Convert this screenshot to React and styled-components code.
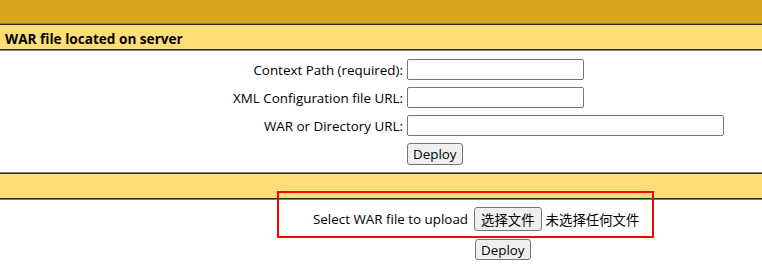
import React from 'react';
import styled, { createGlobalStyle } from 'styled-components';

const GlobalStyle = createGlobalStyle`
  html, body {
    margin: 0;
    padding: 0;
    background: #ffffff;
  }
  body {
    font-family: "Open Sans", "Noto Sans CJK SC", sans-serif;
    font-size: 13.4px;
    color: #000000;
  }
`;

const Page = styled.div`
  width: 762px;
  position: relative;
`;

const TitleBar = styled.div`
  height: 23px;
  background: #d6a51b;
`;

const SectionHeader = styled.div`
  box-sizing: border-box;
  height: 28px;
  background: #ffdd77;
  border-top: 1px solid #7c7c7c;
  border-bottom: 1px solid #7c7c7c;
  box-shadow: inset 0 1px 0 #2a2a2a, inset 0 -1px 0 #2a2a2a;
  display: flex;
  align-items: center;
  padding: 2px 0 0 5px;
  font-weight: bold;
  font-size: 13.6px;
`;

const FormGrid = styled.div`
  display: grid;
  grid-template-columns: 403px auto;
  column-gap: 4px;
  row-gap: 7px;
  align-items: center;
  padding: 8px 0 7px;
`;

const Label = styled.label`
  text-align: right;
  white-space: nowrap;
`;

const TextInput = styled.input`
  box-sizing: border-box;
  width: ${props => props.$width}px;
  height: 21px;
  border: 1px solid #767676;
  border-radius: 2px;
  padding: 1px 2px;
  font: inherit;
  justify-self: start;
`;

const Button = styled.button`
  box-sizing: border-box;
  height: ${props => props.$height || 21}px;
  padding: 0 ${props => props.$padX || 5}px;
  background: #efefef;
  border: 1px solid #767676;
  border-radius: 3px;
  font-family: "Open Sans", "Noto Sans CJK SC", sans-serif;
  font-size: 13.4px;
  color: #000;
  justify-self: start;
`;

const UploadBody = styled.div`
  display: flex;
  flex-direction: column;
  align-items: flex-start;
  padding: 7px 0 6px 313px;
  gap: 8px;
`;

const UploadRow = styled.div`
  display: flex;
  align-items: center;
  white-space: nowrap;
`;

const UploadLabel = styled.span`
  margin-right: 6px;
`;

const NoFile = styled.span`
  margin-left: 4px;
  font-family: "Noto Sans CJK SC", sans-serif;
`;

const DeployWrap = styled.div`
  padding-left: 162px;
`;

const Highlight = styled.div`
  position: absolute;
  left: 277px;
  top: 191px;
  width: 377px;
  height: 47px;
  box-sizing: border-box;
  border: 2px solid #ff0000;
  pointer-events: none;
`;

export default function App() {
  return (
    <Page>
      <GlobalStyle />
      <TitleBar />
      <SectionHeader>WAR file located on server</SectionHeader>
      <FormGrid>
        <Label>Context Path (required):</Label>
        <TextInput $width={177} />
        <Label>XML Configuration file URL:</Label>
        <TextInput $width={177} />
        <Label>WAR or Directory URL:</Label>
        <TextInput $width={317} />
        <span />
        <Button $height={22}>Deploy</Button>
      </FormGrid>
      <SectionHeader />
      <UploadBody>
        <UploadRow>
          <UploadLabel>Select WAR file to upload</UploadLabel>
          <Button $height={24} $padX={6}>选择文件</Button>
          <NoFile>未选择任何文件</NoFile>
        </UploadRow>
        <DeployWrap>
          <Button $height={21}>Deploy</Button>
        </DeployWrap>
      </UploadBody>
      <Highlight />
    </Page>
  );
}
